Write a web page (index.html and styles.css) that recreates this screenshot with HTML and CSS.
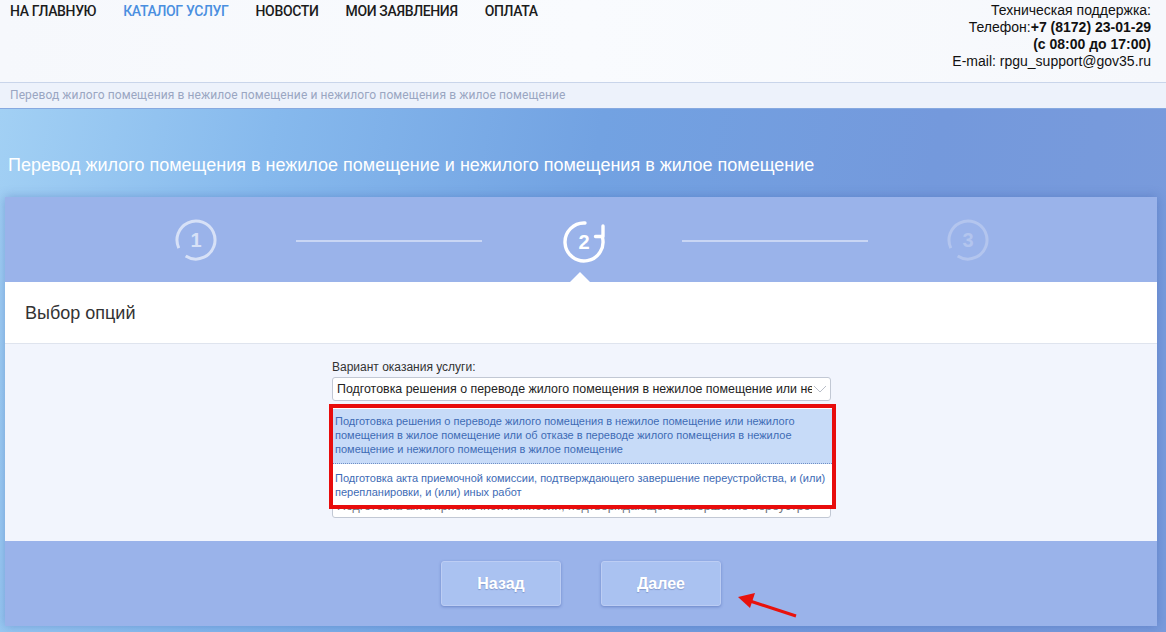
FILE: index.html
```html
<!DOCTYPE html>
<html lang="ru">
<head>
<meta charset="utf-8">
<title>Перевод жилого помещения</title>
<link rel="stylesheet" href="styles.css">
</head>
<body>
<header class="top">
  <nav class="menu">
    <a class="menu-item">НА ГЛАВНУЮ</a>
    <a class="menu-item active">КАТАЛОГ УСЛУГ</a>
    <a class="menu-item">НОВОСТИ</a>
    <a class="menu-item">МОИ ЗАЯВЛЕНИЯ</a>
    <a class="menu-item">ОПЛАТА</a>
  </nav>
  <div class="support">
    <div>Техническая поддержка:</div>
    <div>Телефон:<b>+7 (8172) 23-01-29</b></div>
    <div><b>(с 08:00 до 17:00)</b></div>
    <div>E-mail: rpgu_support@gov35.ru</div>
  </div>
</header>
<div class="crumbs">Перевод жилого помещения в нежилое помещение и нежилого помещения в жилое помещение</div>
<main class="stage">
  <h1 class="page-title">Перевод жилого помещения в нежилое помещение и нежилого помещения в жилое помещение</h1>
  <section class="card">
    <div class="steps">
      <div class="step step-done">
        <svg class="ring" width="44" height="44" viewBox="0 0 44 44"><circle cx="22" cy="22" r="19" fill="none" stroke="currentColor" stroke-width="3" stroke-dasharray="108 11.4" transform="rotate(155 22 22)"/></svg>
        <span class="step-num">1</span>
      </div>
      <div class="step-line"></div>
      <div class="step step-current">
        <svg class="ring" width="48" height="48" viewBox="0 0 48 48"><path d="M25 5 A19 19 0 1 0 42.2 18.5" fill="none" stroke="#fff" stroke-width="3.4" stroke-linecap="round"/><path d="M43 8 V18.5 H35.5" fill="none" stroke="#fff" stroke-width="3.4" stroke-linecap="round" stroke-linejoin="round"/></svg>
        <span class="step-num">2</span>
      </div>
      <div class="step-line"></div>
      <div class="step step-next">
        <svg class="ring" width="44" height="44" viewBox="0 0 44 44"><circle cx="22" cy="22" r="19" fill="none" stroke="currentColor" stroke-width="3" stroke-dasharray="108 11.4" transform="rotate(155 22 22)"/></svg>
        <span class="step-num">3</span>
      </div>
      <span class="pointer"></span>
    </div>
    <div class="panel-head">Выбор опций</div>
    <div class="panel-body">
      <div class="form">
        <label class="field-label">Вариант оказания услуги:</label>
        <div class="select">
          <span class="select-text">Подготовка решения о переводе жилого помещения в нежилое помещение или нежилого помещения</span>
          <svg class="chev" width="14" height="10" viewBox="0 0 14 10"><path d="M1 2 L7 8 L13 2" fill="none" stroke="#b9bec8" stroke-width="1"/></svg>
        </div>
        <div class="select select-behind">
          <span class="select-text muted">Подготовка акта приемочной комиссии, подтверждающего завершение переустройства</span>
        </div>
        <ul class="dropdown">
          <li class="option selected">Подготовка решения о переводе жилого помещения в нежилое помещение или нежилого<br>помещения в жилое помещение или об отказе в переводе жилого помещения в нежилое<br>помещение и нежилого помещения в жилое помещение</li>
          <li class="option">Подготовка акта приемочной комиссии, подтверждающего завершение переустройства, и (или)<br>перепланировки, и (или) иных работ</li>
        </ul>
      </div>
    </div>
    <div class="actions">
      <button class="btn">Назад</button>
      <button class="btn">Далее</button>
    </div>
    <svg class="annot-arrow" width="72" height="36" viewBox="0 0 72 36"><line x1="66" y1="28" x2="20" y2="13" stroke="#e8120c" stroke-width="3"/><polygon points="8,9 25,5 20,20" fill="#e8120c"/></svg>
  </section>
</main>
</body>
</html>
```
FILE: styles.css
```css
* { box-sizing: border-box; }
html, body { margin: 0; padding: 0; }
body {
  width: 1166px;
  height: 632px;
  overflow: hidden;
  font-family: "Liberation Sans", Arial, sans-serif;
  color: #222;
  background: #8fb8ec;
}
.top {
  height: 82px;
  display: flex;
  justify-content: space-between;
  align-items: flex-start;
  background: linear-gradient(90deg, #f6f8fc 0%, #f9fbfe 50%, #f6f8fc 100%);
}
.menu {
  display: flex;
  gap: 27px;
  padding: 3px 0 0 10px;
}
.menu-item {
  font-family: Roboto, "Liberation Sans", sans-serif;
  font-size: 14px;
  line-height: 16px;
  font-weight: 500;
  color: #1c1c1c;
  text-decoration: none;
  letter-spacing: -0.35px;
}
.menu-item.active { color: #4a8fe0; }
.support {
  padding: 2px 15px 0 0;
  text-align: right;
  font-size: 14px;
  line-height: 17px;
  color: #111;
}
.crumbs {
  height: 27px;
  border-top: 1px solid #c9d5ea;
  border-bottom: 1px solid #86a9e0;
  background: #edf2fb;
  padding-left: 10px;
  font-family: Roboto, "Liberation Sans", sans-serif;
  font-size: 12px;
  line-height: 25px;
  letter-spacing: 0.1px;
  color: #9aa6c2;
}
.stage {
  height: 523px;
  padding: 45px 0 0 0;
  background: linear-gradient(100deg, #a2d0f4 0%, #86b9ed 22%, #72a2e2 48%, #7499dc 75%, #7a9bdc 100%);
}
.page-title {
  margin: 0 0 21px 8px;
  font-size: 18px;
  line-height: 22px;
  font-weight: normal;
  color: #fff;
}
.card {
  position: relative;
  margin-left: 5px;
  width: 1152px;
  height: 429px;
  background: #9ab3ea;
  box-shadow: 0 0 10px rgba(45, 80, 160, 0.35);
  display: flex;
  flex-direction: column;
}
.steps {
  position: relative;
  height: 85px;
  display: flex;
  align-items: center;
  justify-content: center;
  gap: 78px;
  padding-left: 2px;
}
.step {
  display: grid;
  place-items: center;
  width: 44px;
  height: 44px;
}
.step > * { grid-area: 1 / 1; }
.step-num {
  font-weight: bold;
  font-size: 20px;
  line-height: 20px;
}
.step-done { color: #d7e1f7; }
.step-current { color: #fff; }
.step-next { color: #b3c5ee; }
.step-line {
  width: 186px;
  height: 2px;
  background: #c9d6f4;
  margin-top: 3px;
}
.pointer {
  position: absolute;
  left: 50%;
  bottom: 0;
  margin-left: -11px;
  width: 0;
  height: 0;
  border-left: 10px solid transparent;
  border-right: 10px solid transparent;
  border-bottom: 10px solid #fff;
}
.panel-head {
  height: 62px;
  background: #fff;
  border-bottom: 1px solid #dfe4ee;
  padding-left: 20px;
  font-size: 18px;
  line-height: 62px;
  color: #333;
}
.panel-body {
  height: 197px;
  background: #f2f5fd;
  padding-top: 15px;
}
.form {
  position: relative;
  width: 500px;
  margin: 0 auto;
  padding-left: 1px;
}
.field-label {
  display: block;
  font-size: 12px;
  line-height: 16px;
  color: #333;
  margin-bottom: 2px;
}
.select {
  position: relative;
  height: 24px;
  width: 499px;
  background: #fff;
  border: 1px solid #c2c8d4;
  border-radius: 3px;
  display: flex;
  align-items: center;
  padding-left: 4px;
}
.select-text {
  width: 475px;
  overflow: hidden;
  white-space: nowrap;
  font-size: 12.4px;
  line-height: 16px;
  color: #222;
}
.select-text.muted { color: #6f747d; }
.chev { margin-left: 1px; }
.select-behind { margin-top: 93px; }
.dropdown {
  position: absolute;
  left: -2px;
  top: 45px;
  width: 507px;
  height: 105px;
  margin: 0;
  padding: 1px 0 0 0;
  list-style: none;
  border: 4px solid #e80c0c;
  background: #fff;
  overflow: hidden;
}
.option {
  padding: 5px 0 7px 2px;
  font-size: 11px;
  line-height: 14px;
  color: #3e6bb5;
  white-space: nowrap;
}
.option.selected {
  background: #c7dbf8;
  border-bottom: 1px dotted #6f8fc4;
}
.option + .option { padding-top: 7px; }
.actions {
  flex: 1;
  display: flex;
  justify-content: center;
  align-items: flex-start;
  gap: 40px;
  padding-top: 20px;
}
.btn {
  width: 120px;
  height: 45px;
  background: #aac2f1;
  border: 1px solid #bccdf4;
  border-radius: 3px;
  box-shadow: 0 1px 3px rgba(50, 80, 160, 0.45);
  font-family: "Liberation Sans", Arial, sans-serif;
  font-weight: bold;
  font-size: 16px;
  color: #fff;
  text-shadow: 0 1px 1px rgba(40, 60, 120, 0.3);
}
.annot-arrow {
  position: absolute;
  left: 725px;
  top: 391px;
}
```
